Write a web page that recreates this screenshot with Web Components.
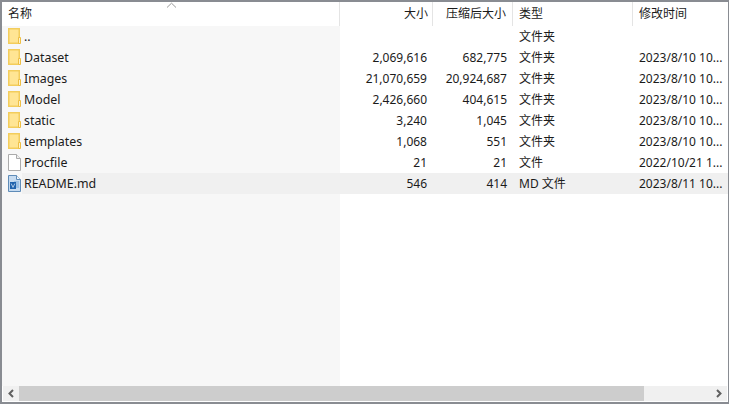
<!DOCTYPE html>
<html><head><meta charset="utf-8">
<style>
html,body{margin:0;padding:0;background:#fff;}
body{width:729px;height:404px;overflow:hidden;font:12px "Noto Sans","Noto Sans CJK SC",sans-serif;color:#1b1b1b;}
</style></head><body>
<file-window>
  <file-header></file-header>
  <file-row name=".." type="文件夹" icon="folder"></file-row>
  <file-row name="Dataset" size="2,069,616" packed="682,775" type="文件夹" date="2023/8/10 10..." icon="folder"></file-row>
  <file-row name="Images" size="21,070,659" packed="20,924,687" type="文件夹" date="2023/8/10 10..." icon="folder"></file-row>
  <file-row name="Model" size="2,426,660" packed="404,615" type="文件夹" date="2023/8/10 10..." icon="folder"></file-row>
  <file-row name="static" size="3,240" packed="1,045" type="文件夹" date="2023/8/10 10..." icon="folder"></file-row>
  <file-row name="templates" size="1,068" packed="551" type="文件夹" date="2023/8/10 10..." icon="folder"></file-row>
  <file-row name="Procfile" size="21" packed="21" type="文件" date="2022/10/21 1..." icon="file"></file-row>
  <file-row name="README.md" size="546" packed="414" type="MD 文件" date="2023/8/11 10..." icon="word" selected></file-row>
  <h-scroll slot="scroll"></h-scroll>
</file-window>
<script>
const COLS='grid-template-columns:338px 93px 80px 120px 1fr;';
const ICONS={
folder:`<svg width="14" height="17" viewBox="0 0 14 17"><path d="M.75.75H11.25V15.25H.75Z" fill="#ffe594" stroke="#f3cd5c" stroke-width="1.5"/><path d="M10.5 15.5V9.5H12.5V15.5Z" fill="#fff4c8" stroke="#eebf45"/></svg>`,
file:`<svg width="14" height="18" viewBox="0 0 14 18"><path d="M.5.5H8.5L12.5 4.5V16.5H.5Z" fill="#fff" stroke="#ababab"/><path d="M8.5 .5V4.5H12.5" fill="#efefef" stroke="#ababab"/></svg>`,
word:`<svg width="14" height="18" viewBox="0 0 14 18"><path d="M.5.5H8.5L12.5 4.5V16.5H.5Z" fill="#c6dbf0" stroke="#5f8cb8"/><path d="M8.5 .5V4.5H12.5" fill="#eef4fa" stroke="#5f8cb8"/><rect x="6" y="6" width="5" height="7" fill="#9cc0e4"/><rect x="2" y="7" width="6" height="7" fill="#1f62ad"/><path d="M3.2 8.6L5 12.4L6.8 8.6" fill="none" stroke="#cfe0f2" stroke-width=".8"/></svg>`};
class FileWindow extends HTMLElement{constructor(){super();this.attachShadow({mode:'open'}).innerHTML=`
<style>:host{display:flex;flex-direction:column;box-sizing:border-box;width:729px;height:404px;border-style:solid;border-color:#898c92;border-width:2px 1px 2px 2px;background:#fff;position:relative;}
.list{flex:1;display:flex;flex-direction:column;min-height:0;background:linear-gradient(to right,#f7f7f7 338px,#fff 338px);}
</style><div class="list"><slot></slot></div><slot name="scroll"></slot>`;}}
class FileHeader extends HTMLElement{constructor(){super();this.attachShadow({mode:'open'}).innerHTML=`
<style>:host{display:grid;${COLS}height:24px;background:#fff;position:relative;line-height:24px;flex:none;}
div{box-sizing:border-box;height:24px;border-right:1px solid #e4e4e4;padding:0 6px;white-space:nowrap;overflow:hidden;}
.r{text-align:right;} .a{padding-right:4px;} .d{border:0;padding-left:6px}
svg{position:absolute;left:164px;top:0;}
</style>
<div>名称</div><div class="r a">大小</div><div class="r">压缩后大小</div><div>类型</div><div class="d">修改时间</div>
<svg width="11" height="6" viewBox="0 0 11 6"><path d="M1 5.5L5.5 1.2L10 5.5" fill="none" stroke="#9a9a9a"/></svg>`;}}
class FileRow extends HTMLElement{constructor(){super();const a=n=>this.getAttribute(n)||'';const sel=this.hasAttribute('selected');this.attachShadow({mode:'open'}).innerHTML=`
<style>:host{display:grid;${COLS}height:21px;line-height:21px;white-space:nowrap;flex:none;position:relative;}
.hl{position:absolute;left:20px;right:0;top:0;bottom:0;background:#f0f0f0;}
.c{position:relative;padding:0 6px;overflow:hidden;box-sizing:border-box;}
.r{text-align:right;}
.n{display:flex;align-items:center;gap:2px;padding-left:6px;overflow:visible;font-size:12.4px;}
.i{width:14px;height:18px;display:flex;align-items:center;flex:none;}
.d{padding-left:6px;}
svg{display:block}
</style>${sel?'<span class="hl"></span>':''}
<div class="c n"><span class="i">${ICONS[a('icon')]}</span><span>${a('name')}</span></div>
<div class="c r">${a('size')}</div><div class="c r">${a('packed')}</div><div class="c">${a('type')}</div><div class="c d">${a('date')}</div>`;}}
class HScroll extends HTMLElement{constructor(){super();this.attachShadow({mode:'open'}).innerHTML=`
<style>:host{display:flex;height:15px;background:#f0f0f0;flex:none;align-items:stretch;margin:0 1px 1px 1px;}
.b{width:16px;display:flex;align-items:center;justify-content:center;flex:none;}
.t{width:625px;background:#cdcdcd;flex:none;}.s{flex:1;}
</style>
<div class="b"><svg width="8" height="9" viewBox="0 0 8 9"><path d="M6 1L2.5 4.5L6 8" fill="none" stroke="#606060" stroke-width="2"/></svg></div>
<div class="t"></div><div class="s"></div>
<div class="b"><svg width="8" height="9" viewBox="0 0 8 9"><path d="M2 1L5.5 4.5L2 8" fill="none" stroke="#606060" stroke-width="2"/></svg></div>`;}}
customElements.define('file-window',FileWindow);
customElements.define('file-header',FileHeader);
customElements.define('file-row',FileRow);
customElements.define('h-scroll',HScroll);
</script>
</body></html>
